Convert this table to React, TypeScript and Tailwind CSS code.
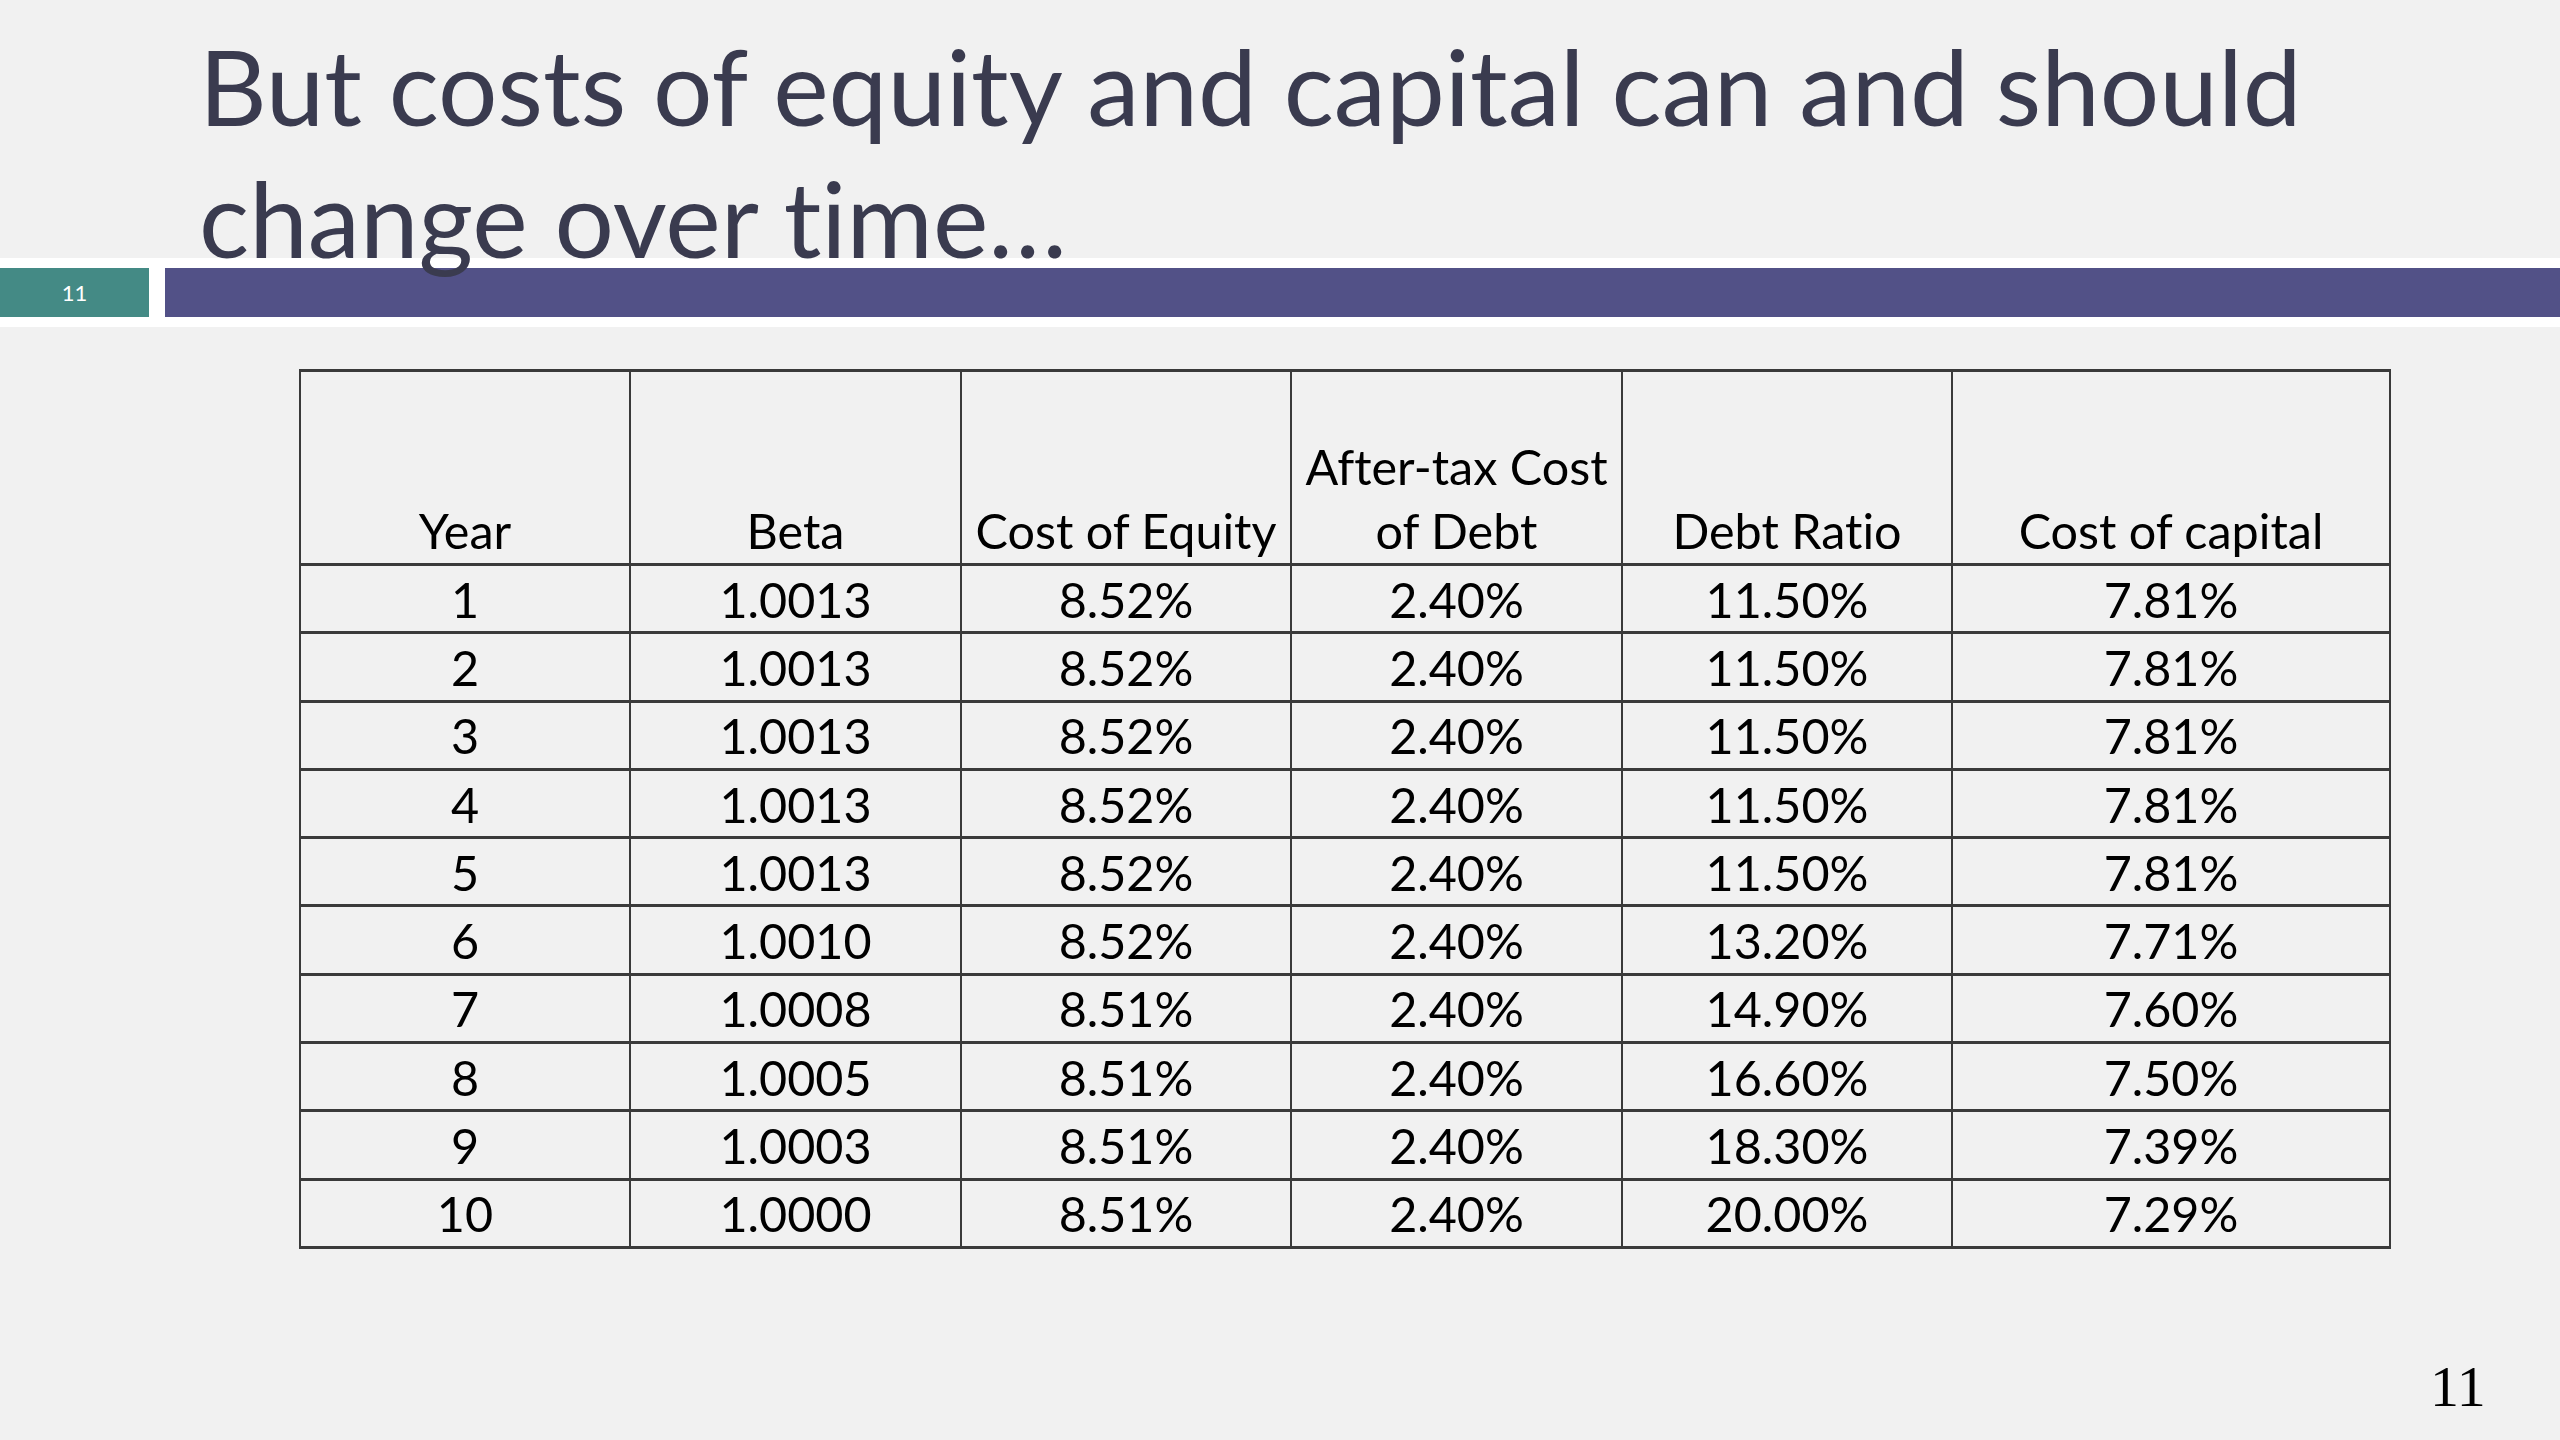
import React from "react";

const rows: [string, string, string, string, string, string][] = [
  ["1", "1.0013", "8.52%", "2.40%", "11.50%", "7.81%"],
  ["2", "1.0013", "8.52%", "2.40%", "11.50%", "7.81%"],
  ["3", "1.0013", "8.52%", "2.40%", "11.50%", "7.81%"],
  ["4", "1.0013", "8.52%", "2.40%", "11.50%", "7.81%"],
  ["5", "1.0013", "8.52%", "2.40%", "11.50%", "7.81%"],
  ["6", "1.0010", "8.52%", "2.40%", "13.20%", "7.71%"],
  ["7", "1.0008", "8.51%", "2.40%", "14.90%", "7.60%"],
  ["8", "1.0005", "8.51%", "2.40%", "16.60%", "7.50%"],
  ["9", "1.0003", "8.51%", "2.40%", "18.30%", "7.39%"],
  ["10", "1.0000", "8.51%", "2.40%", "20.00%", "7.29%"],
];

const widths = ["w-[330px]", "w-[331px]", "w-[330px]", "w-[331px]", "w-[330px]", "w-[438px]"];

export default function App() {
  return (
    <div className="w-[2560px] h-[1440px] bg-[#f1f1f1] overflow-hidden relative font-['Lato','Carlito','Noto_Sans',sans-serif] [font-variant-ligatures:none]">
      <div className="relative z-10 h-[258px] pl-[199px] pt-[19px] text-[105px] leading-[132px] text-[#3a3b4f] whitespace-nowrap">
        But costs of equity and capital can and should
        <br />
        change over time…
      </div>
      <div className="bg-white py-[10px] flex gap-[16px]">
        <div className="w-[149px] h-[49px] bg-[#448a85] flex items-center justify-center text-white text-[22px] font-['Lato',sans-serif]">
          11
        </div>
        <div className="flex-1 h-[49px] bg-[#525187]" />
      </div>
      <div className="pl-[299px] pt-[42px]">
        <table className="border-collapse text-black text-[48.5px] text-center">
          <thead>
            <tr className="h-[194px]">
              {["Year", "Beta", "Cost of Equity", "", "Debt Ratio", "Cost of capital"].map((h, i) => (
                <th
                  key={i}
                  className={`${widths[i]} font-normal align-bottom leading-[64px] pb-[1px] border-x-2 border-y-[3px] border-[#3a3a3a] whitespace-nowrap`}
                >
                  {i === 3 ? (
                    <>
                      After-tax Cost
                      <br />
                      of Debt
                    </>
                  ) : (
                    h
                  )}
                </th>
              ))}
            </tr>
          </thead>
          <tbody>
            {rows.map((r, ri) => (
              <tr key={ri} className="h-[68.3px]">
                {r.map((c, ci) => (
                  <td
                    key={ci}
                    className="p-0 leading-[60px] align-middle border-x-2 border-y-[3px] border-[#3a3a3a]"
                  >
                    {c}
                  </td>
                ))}
              </tr>
            ))}
          </tbody>
        </table>
      </div>
      <div className="absolute left-[2430px] top-[1352px] text-[58px] leading-[70px] text-black font-['Liberation_Serif',serif]">
        11
      </div>
    </div>
  );
}
